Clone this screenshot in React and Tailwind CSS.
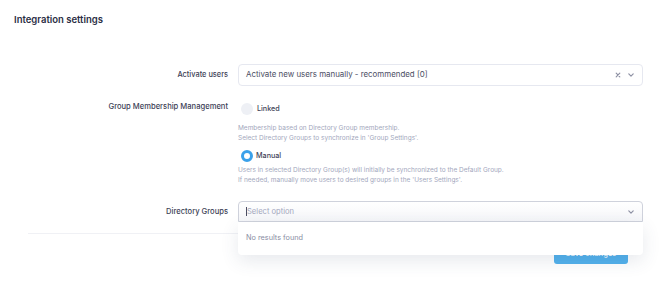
import React from "react";

function Chevron({ className }) {
  return (
    <svg viewBox="0 0 10 10" className={className} fill="none" stroke="currentColor" strokeWidth="1.2" strokeLinecap="round" strokeLinejoin="round">
      <path d="M2.8 3.9 L5 6.1 L7.2 3.9" />
    </svg>
  );
}

function XIcon({ className }) {
  return (
    <svg viewBox="0 0 10 10" className={className} fill="none" stroke="currentColor" strokeWidth="1.2" strokeLinecap="round">
      <path d="M3.2 3.2 L6.8 6.8 M6.8 3.2 L3.2 6.8" />
    </svg>
  );
}

export default function App() {
  return (
    <div className="w-[670px] h-[304px] bg-white overflow-hidden font-['Inter',sans-serif] text-[#3d4156]">
      <div className="pt-[14px] pl-[14px] text-[9.5px] leading-[12px] font-semibold text-[#2b2e45]">
        Integration settings
      </div>

      <div className="mt-[38px] flex flex-col">
        {/* Activate users */}
        <div className="flex items-center gap-[10px]">
          <div className="w-[228px] text-right text-[7.4px] font-medium text-[#3d4156]">Activate users</div>
          <div className="w-[405px] h-[22px] rounded-[4px] border border-[#e6e8f0] flex items-center pl-[7px] pr-[6px]">
            <span className="flex-1 text-[7.9px] text-[#4a4e63]">Activate new users manually - recommended [0]</span>
            <XIcon className="w-[10px] h-[10px] text-[#8e91a4]" />
            <Chevron className="ml-[3px] w-[10px] h-[10px] text-[#8e91a4]" />
          </div>
        </div>

        {/* Group membership */}
        <div className="mt-[15px] flex gap-[10px]">
          <div className="w-[228px] pt-[1px] text-right text-[7.6px] leading-[10px] font-medium text-[#3d4156]">
            Group Membership Management
          </div>
          <div className="w-[405px] pt-[2px] flex flex-col">
            <div className="flex items-center h-[12px] pl-[3px]">
              <div className="w-[12px] h-[12px] rounded-full bg-[#eef0f5]" />
              <span className="ml-[4px] text-[7.2px] font-medium text-[#3d4156]">Linked</span>
            </div>
            <div className="mt-[8px] text-[6.5px] leading-[10px] text-[#a3a7bd]">
              <div>Membership based on Directory Group membership.</div>
              <div>Select Directory Groups to synchronize in 'Group Settings'.</div>
            </div>
            <div className="mt-[7px] flex items-center h-[12px] pl-[3px]">
              <div className="w-[12px] h-[12px] rounded-full border-[3px] border-[#3aa1ea] bg-white" />
              <span className="ml-[3px] text-[7.2px] font-medium text-[#3d4156]">Manual</span>
            </div>
            <div className="mt-[3px] text-[6.5px] leading-[10px] text-[#a3a7bd]">
              <div>Users in selected Directory Group(s) will initially be synchronized to the Default Group.</div>
              <div>If needed, manually move users to desired groups in the 'Users Settings'.</div>
            </div>
          </div>
        </div>

        {/* Directory groups */}
        <div className="mt-[16px] flex items-center gap-[10px]">
          <div className="w-[228px] text-right text-[7.6px] font-medium text-[#3d4156]">Directory Groups</div>
          <div className="relative w-[405px]">
            <div className="h-[21px] rounded-t-[4px] border border-[#cfd2dc] bg-gradient-to-b from-white to-[#f5f6f9] flex items-center pl-[7px] pr-[6px]">
              <span className="w-[1px] h-[9px] bg-[#4a4e63]" />
              <span className="flex-1 text-[7.6px] text-[#a3a7bd]">Select option</span>
              <Chevron className="w-[10px] h-[10px] text-[#8e91a4]" />
            </div>
            <div className="absolute left-0 right-0 top-[21px] h-[33px] bg-white rounded-b-[4px] shadow-[0_6px_18px_rgba(60,70,110,0.12)] flex items-center pl-[8px] z-10">
              <span className="text-[7.3px] text-[#8a8ea3]">No results found</span>
            </div>
          </div>
        </div>

        <div className="mt-[11px] ml-[28px] mr-[28px] h-[1px] bg-[#f0f1f5]" />

        <div className="mt-[9px] flex justify-end pr-[42px]">
          <button className="w-[74px] h-[21px] rounded-[3px] bg-[#52b1ec] text-white text-[7.6px] font-medium">
            Save changes
          </button>
        </div>
      </div>
    </div>
  );
}
